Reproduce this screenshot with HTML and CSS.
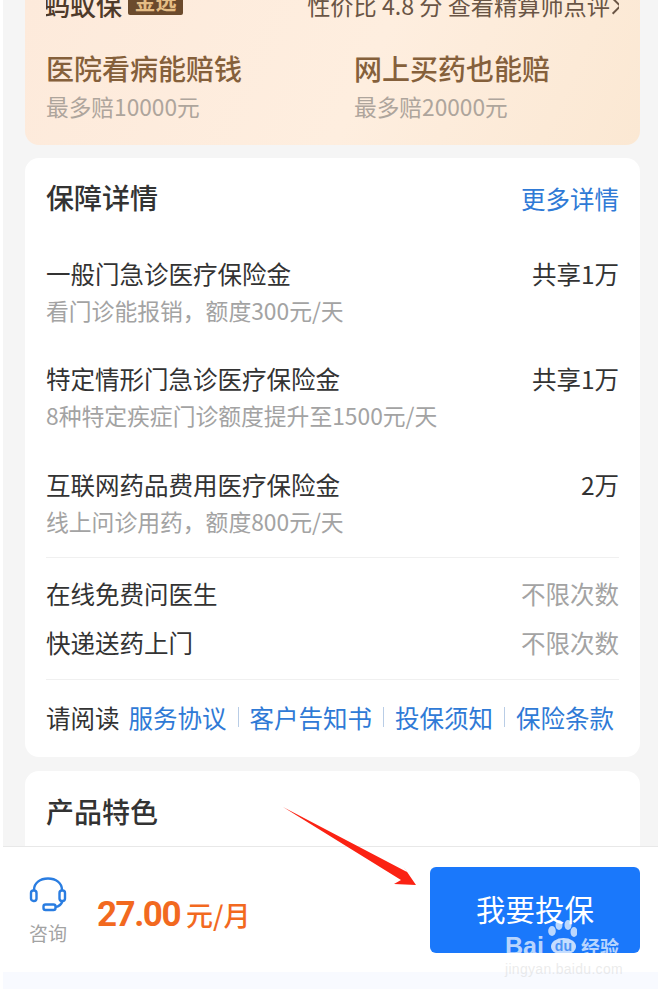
FILE: index.html
```html
<!DOCTYPE html>
<html lang="zh-CN">
<head>
    <meta charset="UTF-8">
    <meta name="viewport" content="width=device-width, initial-scale=1.0">
    <title>保障详情</title>
    <link rel="stylesheet" href="styles.css">
</head>
<body>

    <div class="page">
        <main class="content">
            <section class="promo">
                <div class="promo-top">
                    <div class="brand">蚂蚁保<span class="brand-tag">金选</span></div>
                    <div class="score">性价比 4.8 分 查看精算师点评<svg class="chevron" viewBox="0 0 10 16"><path d="M1.5 1 L8.5 8 L1.5 15"/></svg></div>
                </div>
                <div class="promo-cols">
                    <div class="promo-col">
                        <h3>医院看病能赔钱</h3>
                        <p>最多赔10000元</p>
                    </div>
                    <div class="promo-col">
                        <h3>网上买药也能赔</h3>
                        <p>最多赔20000元</p>
                    </div>
                </div>
            </section>

            <section class="card">
                <div class="card-head">
                    <h2>保障详情</h2>
                    <a class="link">更多详情</a>
                </div>
                <div class="item">
                    <div class="item-main"><span>一般门急诊医疗保险金</span><span>共享1万</span></div>
                    <p>看门诊能报销，额度300元/天</p>
                </div>
                <div class="item">
                    <div class="item-main"><span>特定情形门急诊医疗保险金</span><span>共享1万</span></div>
                    <p>8种特定疾症门诊额度提升至1500元/天</p>
                </div>
                <div class="item">
                    <div class="item-main"><span>互联网药品费用医疗保险金</span><span>2万</span></div>
                    <p>线上问诊用药，额度800元/天</p>
                </div>
                <div class="extras">
                    <div class="extra"><span>在线免费问医生</span><span class="muted">不限次数</span></div>
                    <div class="extra"><span>快递送药上门</span><span class="muted">不限次数</span></div>
                </div>
                <div class="docs">
                    <span>请阅读</span>
                    <a class="link">服务协议</a><i></i>
                    <a class="link">客户告知书</a><i></i>
                    <a class="link">投保须知</a><i></i>
                    <a class="link">保险条款</a>
                </div>
            </section>

            <section class="card card-last">
                <h2>产品特色</h2>
            </section>
        </main>

        <footer class="bar">
            <div class="consult">
                <svg class="headset" viewBox="0 0 38 36">
                    <path d="M5 13 C5 6 11 1.500 19 1.500 C27 1.500 33 6 33 13"/>
                    <rect x="2" y="13.500" width="5.500" height="10.500" rx="2.500"/>
                    <rect x="30.500" y="13.500" width="5.500" height="10.500" rx="2.500"/>
                    <path d="M33.500 24 C32.500 27 30 29.500 26.500 30"/>
                    <rect x="14.500" y="27.500" width="12" height="5.500" rx="2"/>
                </svg>
                <span>咨询</span>
            </div>
            <div class="price"><b>27.00</b> 元/月</div>
            <button class="buy">我要投保</button>
        </footer>
        <div class="bottom-strip"></div>

        <svg class="arrow" viewBox="0 0 140 84">
            <path d="M1 1 L125 66 L121 60 L134 79 L112 78 L119 74 Z"/>
        </svg>

        <div class="watermark">
            <svg class="paw" viewBox="0 0 30 34">
                <ellipse cx="5" cy="11" rx="3.800" ry="5"/>
                <ellipse cx="12" cy="5" rx="3.500" ry="5"/>
                <ellipse cx="21" cy="5" rx="3.500" ry="5"/>
                <ellipse cx="27" cy="12" rx="3.500" ry="5"/>
            </svg>
            <div class="wm-logo">
                <span>Bai</span>
                <span class="wm-du">du</span>
                <span class="wm-cn">经验</span>
            </div>
            <div class="wm-url">jingyan.baidu.com</div>
        </div>
    </div>

</body>
</html>
```

FILE: styles.css
```css
* {
    box-sizing: border-box;
}
html, body {
    margin: 0;
    padding: 0;
    background: #fff;
}
body {
    font-family: "Noto Sans CJK SC", "Roboto", sans-serif;
    color: #333;
}
h2, h3, p {
    margin: 0;
    font-weight: normal;
}
.page {
    position: relative;
    width: 658px;
    height: 989px;
    overflow: hidden;
}
.content {
    height: 846px;
    margin-left: 3px;
    padding: 0 18px 0 22px;
    background: #f5f5f5;
    overflow: hidden;
}
.link {
    color: #2f7ad6;
}
.muted {
    color: #a3a3a3;
}

/* top promo card, cut off by the screenshot */
.promo {
    height: 145px;
    padding: 0 21px;
    background: linear-gradient(115deg, #fdeadb 0%, #feeedf 55%, #fbe8d3 100%);
    border-radius: 0 0 14px 14px;
}
.promo-top {
    height: 18px;
    display: flex;
    justify-content: space-between;
    align-items: flex-end;
    overflow: hidden;
    white-space: nowrap;
}
.brand {
    display: flex;
    align-items: flex-end;
    gap: 6px;
    margin-left: -2px;
    margin-bottom: -4px;
    font-size: 26px;
    font-weight: 500;
    line-height: 34px;
    color: #4f3a2a;
}
.brand-tag {
    width: 55px;
    margin-bottom: 7px;
    font-size: 21px;
    font-weight: 700;
    line-height: 30px;
    text-align: center;
    color: #e5bd85;
    background: #6b4a2c;
    border-radius: 2px;
}
.score {
    margin-right: -3px;
    margin-bottom: -4px;
    font-size: 23.200px;
    line-height: 34px;
    color: #6a5545;
}
.chevron {
    width: 11px;
    height: 18px;
    margin-left: 1px;
    fill: none;
    stroke: #6a5545;
    stroke-width: 1.800;
}
.promo-cols {
    display: flex;
    margin-top: 31px;
}
.promo-col {
    flex: none;
    width: 308px;
}
.promo-col h3 {
    font-size: 28px;
    font-weight: 500;
    line-height: 38px;
    color: #85603b;
}
.promo-col p {
    margin-top: 4px;
    font-size: 22.700px;
    line-height: 32px;
    color: #aea59c;
}

/* white cards */
.card {
    height: 599px;
    margin-top: 13px;
    padding: 0 21px;
    background: #fff;
    border-radius: 14px;
}
.card h2 {
    font-size: 28px;
    font-weight: 500;
    line-height: 40px;
    color: #333;
}
.card-head {
    display: flex;
    justify-content: space-between;
    align-items: center;
    height: 81.500px;
    font-size: 24.500px;
}
.card-head h2 {
    margin-bottom: 3px;
}
.item {
    height: 105.500px;
    padding-top: 16px;
}
.item-main, .extra {
    display: flex;
    justify-content: space-between;
    font-size: 24.500px;
    line-height: 36px;
}
.item p {
    margin-top: 1px;
    font-size: 22.800px;
    line-height: 36px;
    color: #a3a3a3;
}
.extras {
    height: 123px;
    margin-top: 1px;
    padding-top: 18px;
    border-top: 1px solid #f0f0f0;
    border-bottom: 1px solid #f0f0f0;
    display: flex;
    flex-direction: column;
    gap: 13px;
}
.docs {
    display: flex;
    align-items: center;
    height: 74px;
    font-size: 24.500px;
    white-space: nowrap;
    gap: 11px;
}
.docs i {
    flex: none;
    width: 1px;
    height: 20px;
    background: #b9cde6;
}
.docs span {
    margin-right: -2px;
}
.card-last {
    height: 120px;
    margin-top: 14px;
    padding-top: 20px;
}

/* bottom bar */
.bar {
    height: 126px;
    margin-left: 3px;
    padding: 21px 18px 20px 24px;
    display: flex;
    align-items: center;
    background: #fff;
    border-top: 1px solid #e8e8e8;
}
.consult {
    width: 42px;
    margin-top: 4px;
    display: flex;
    flex-direction: column;
    align-items: center;
    font-size: 19px;
    line-height: 28px;
    color: #a3a3a3;
}
.headset {
    width: 38px;
    height: 36px;
    margin-bottom: 6px;
    fill: none;
    stroke: #2a7de1;
    stroke-width: 2.400;
}
.price {
    margin-top: 9px;
    margin-left: 28px;
    font-size: 27px;
    font-weight: 500;
    color: #f2691f;
    white-space: nowrap;
}
.price b {
    font-family: "Roboto", sans-serif;
    font-size: 35px;
    font-weight: 700;
    letter-spacing: -1.500px;
}
.buy {
    width: 210px;
    height: 86px;
    margin-left: auto;
    padding: 0 0 4px;
    border: none;
    border-radius: 6px;
    background: #1a78fb;
    color: #fff;
    font-family: inherit;
    font-size: 29.500px;
}
.bottom-strip {
    height: 17px;
    margin-left: 3px;
    background: #f8faff;
}

/* annotation + watermark sit over the screenshot */
.arrow {
    position: absolute;
    left: 282px;
    top: 806px;
    width: 140px;
    height: 84px;
    fill: #fb2213;
}
.watermark {
    position: absolute;
    left: 505px;
    top: 920px;
    width: 120px;
    color: rgba(255, 255, 255, 0.7);
    white-space: nowrap;
}
.paw {
    position: absolute;
    left: 42px;
    top: 0;
    width: 30px;
    height: 34px;
    fill: rgba(255, 255, 255, 0.7);
}
.wm-logo {
    display: flex;
    align-items: center;
    height: 18px;
    margin-top: 17px;
    font-family: "Liberation Sans", sans-serif;
    font-size: 25px;
    font-weight: 700;
}
.wm-du {
    flex: none;
    width: 25px;
    height: 17px;
    margin-left: 7px;
    font-size: 14px;
    line-height: 17px;
    text-align: center;
    color: #4b92f5;
    background: rgba(255, 255, 255, 0.75);
    border-radius: 50%;
}
.wm-cn {
    margin-left: 5px;
    font-family: "Noto Sans CJK SC", sans-serif;
    font-size: 19px;
}
.wm-url {
    margin-top: 6px;
    font-family: "Liberation Sans", sans-serif;
    font-size: 14px;
    letter-spacing: 0.300px;
    line-height: 16px;
    color: rgba(215, 215, 215, 0.5);
}
```
